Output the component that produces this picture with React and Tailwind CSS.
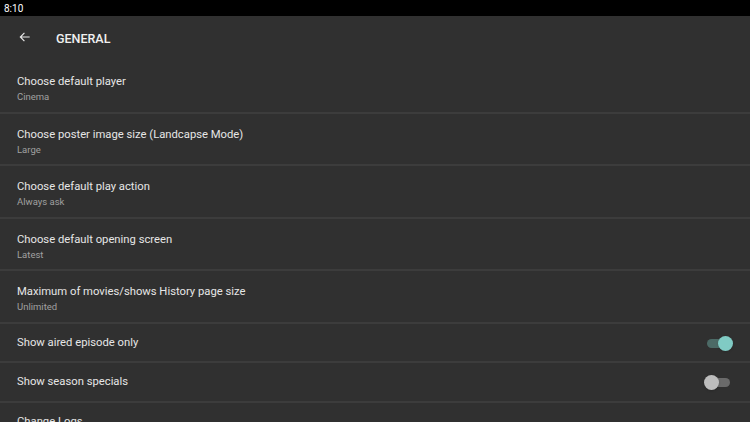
import React from 'react';

const settings = [
  { title: 'Choose default player', value: 'Cinema' },
  { title: 'Choose poster image size (Landcapse Mode)', value: 'Large' },
  { title: 'Choose default play action', value: 'Always ask' },
  { title: 'Choose default opening screen', value: 'Latest' },
  { title: 'Maximum of movies/shows History page size', value: 'Unlimited' },
];

const toggles = [
  { title: 'Show aired episode only', on: true },
  { title: 'Show season specials', on: false },
  { title: 'Change Logs', on: null },
];

const Switch = ({ on }) => (
  <div className="relative w-[29px] h-[15px] flex items-center">
    <div className={`mx-[3px] w-[23px] h-[9px] rounded-full ${on ? 'bg-[#4c6a66]' : 'bg-[#6a6a6a]'}`}></div>
    <div
      className={`absolute top-0 w-[15px] h-[15px] rounded-full shadow ${on ? 'right-0 bg-[#80cbc4]' : 'left-0 bg-[#bdbdbd]'}`}
    ></div>
  </div>
);

export default function App() {
  return (
    <div className="w-[750px] h-[422px] overflow-hidden bg-[#303030] font-['Roboto',sans-serif]">
      {/* barra de status */}
      <div className="h-[16px] bg-black flex items-center px-[4px] text-white text-[10px]">8:10</div>

      {/* cabeçalho */}
      <div className="h-[45px] flex items-center pl-[18px]">
        <svg width="14" height="14" viewBox="0 0 24 24" fill="none" stroke="#e8e8e8" strokeWidth="2" className="-mt-[4px]">
          <path d="M20 12H4M11 5l-7 7 7 7" />
        </svg>
        <span className="ml-[24px] text-[12.5px] font-medium text-[#f0f0f0] mt-[1px]">GENERAL</span>
      </div>

      {/* opções */}
      {settings.map((s) => (
        <div key={s.title} className="h-[52.5px] border-b-2 border-[#3c3c3c] pl-[17px] pt-[14px]">
          <div className="text-[11.25px] leading-[14px] text-[#e6e6e6]">{s.title}</div>
          <div className="text-[9.5px] leading-[14px] mt-[1px] text-[#a0a0a0]">{s.value}</div>
        </div>
      ))}

      {toggles.map((t) => (
        <div key={t.title} className="h-[39.5px] border-b-2 border-[#3c3c3c] pl-[17px] pr-[17px] pt-[2px] flex items-center justify-between">
          <span className="text-[11.25px] text-[#e6e6e6]">{t.title}</span>
          {t.on !== null && <Switch on={t.on} />}
        </div>
      ))}
    </div>
  );
}
